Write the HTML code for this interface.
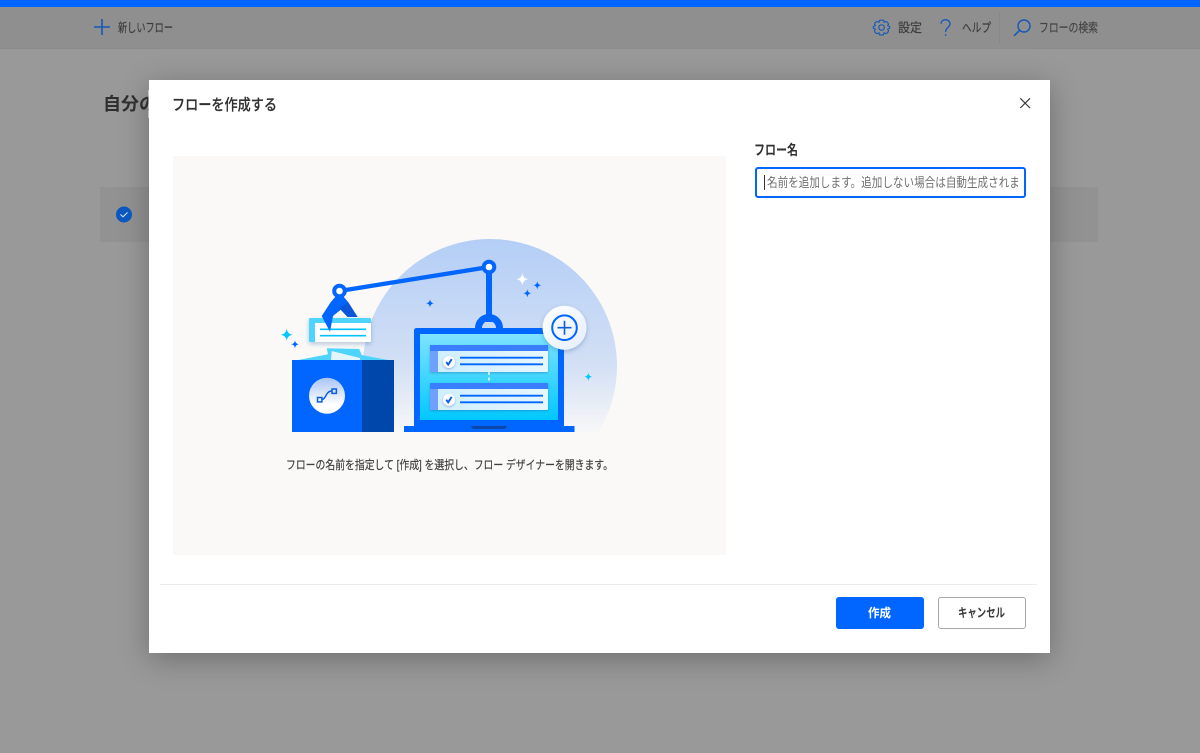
<!DOCTYPE html>
<html lang="ja">
<head>
<meta charset="utf-8">
<title>フローを作成する</title>
<style>
html,body{margin:0;padding:0;width:1200px;height:753px;overflow:hidden;background:#999;}
body{position:relative;font-family:"Liberation Sans","Noto Sans CJK JP",sans-serif;}
.abs{position:absolute;box-sizing:border-box;}
svg{position:absolute;left:0;top:0;filter:blur(.35px);}
text{font-family:"Liberation Sans","Noto Sans CJK JP",sans-serif;}
.h{stroke:currentColor;stroke-width:.18px;}
</style>
</head>
<body>
<div class="abs" style="left:0;top:0;width:1200px;height:7px;background:#0066ff"></div>
<div class="abs" style="left:0;top:7px;width:1200px;height:42px;background:#8f8f8f;border-bottom:1px solid #8b8b8b"></div>
<div class="abs" style="left:999px;top:12px;width:1px;height:31px;background:#888"></div>
<div class="abs" style="left:100px;top:187px;width:998px;height:55px;background:#929292"></div>
<div class="abs" style="left:148.5px;top:79.5px;width:901.5px;height:573.5px;background:#fff;box-shadow:0 6px 28px rgba(0,0,0,.28)"></div>
<div class="abs" style="left:173px;top:156px;width:553px;height:399px;background:#faf9f8"></div>
<div class="abs" style="left:160px;top:584px;width:877px;height:1px;background:#edebe9"></div>
<div class="abs" style="left:755px;top:167px;width:271px;height:31px;background:#fff;border:2px solid #0066ff;border-radius:3px"></div>
<div class="abs" style="left:836px;top:597px;width:88px;height:32px;background:#0066ff;border-radius:3px"></div>
<div class="abs" style="left:938px;top:597px;width:88px;height:32px;background:#fff;border:1px solid #a8a8a8;border-radius:3px"></div>

<svg width="1200" height="753" viewBox="0 0 1200 753" xmlns="http://www.w3.org/2000/svg">
<defs>
<linearGradient id="bg" x1="0" y1="0" x2="0" y2="1"><stop offset="0" stop-color="#b4cef6"/><stop offset=".5" stop-color="#d3e0f5"/><stop offset=".78" stop-color="#faf9f8"/></linearGradient>
<linearGradient id="scr" x1="0" y1="0" x2="0" y2="1"><stop offset="0" stop-color="#7fe3ff"/><stop offset="1" stop-color="#00c8ff"/></linearGradient>
<linearGradient id="cbody" x1="0" y1="0" x2="1" y2="0"><stop offset="0" stop-color="#cdeeff"/><stop offset="1" stop-color="#e6f6ff"/></linearGradient>
<linearGradient id="orb" x1="0" y1="0" x2="0" y2="1"><stop offset="0" stop-color="#a8c4f5"/><stop offset=".75" stop-color="#fff"/></linearGradient>
<linearGradient id="badge" x1="0" y1="0" x2="1" y2="1"><stop offset="0" stop-color="#fff"/><stop offset="1" stop-color="#e6eefb"/></linearGradient>
<filter id="sh" x="-30%" y="-30%" width="160%" height="160%"><feDropShadow dx="0" dy="2" stdDeviation="2.500" flood-color="#20508f" flood-opacity=".3"/></filter>
<filter id="sh2" x="-40%" y="-40%" width="180%" height="180%"><feDropShadow dx="0" dy="1" stdDeviation="1" flood-color="#20508f" flood-opacity=".4"/></filter>
<clipPath id="cut"><rect x="340" y="230" width="300" height="202"/></clipPath>
<clipPath id="ph"><rect x="762" y="170" width="256" height="26"/></clipPath>
<clipPath id="hub"><rect x="470" y="300" width="40" height="28.500"/></clipPath>
</defs>

<!-- top bar -->
<path d="M94 27H110M102 19V35" stroke="#1558b8" stroke-width="1.600" fill="none"/>
<text class="h" x="118" y="32" font-size="12.500" fill="#3c3c3c" color="#3c3c3c" textLength="55" lengthAdjust="spacingAndGlyphs">新しいフロー</text>
<g fill="none" stroke="#1558b8" stroke-width="1.200" stroke-linejoin="round" transform="translate(881.600 27.500) scale(.92) translate(-881.500 -27.600)">
<path d="M879.400 19.600h4.200l.6 2.400 2-.9 1.900.9.900 2-.9 1.600 2.200 1v1.800l-2.200 1 .9 1.900-.9 2-2 .9-2-.9-.6 2.400h-4.200l-.6-2.400-2 .9-2-.9-.9-2 .9-1.900-2.200-1v-1.800l2.200-1-.9-1.600.9-2 1.900-.9 2 .9z"/>
<circle cx="881.500" cy="27.600" r="3"/>
</g>
<text class="h" x="898" y="32" font-size="12.500" fill="#3c3c3c" color="#3c3c3c" textLength="24" lengthAdjust="spacingAndGlyphs">設定</text>
<path d="M941 23.800C941 18.300 950 18.300 950 23.800C950 27.600 945.600 27.400 945.600 32" fill="none" stroke="#1558b8" stroke-width="1.300"/>
<circle cx="945.600" cy="35" r=".9" fill="#1558b8"/>
<text class="h" x="962" y="32" font-size="12.500" fill="#3c3c3c" color="#3c3c3c" textLength="29" lengthAdjust="spacingAndGlyphs">ヘルプ</text>
<circle cx="1024" cy="26" r="6" fill="none" stroke="#1558b8" stroke-width="1.400"/>
<path d="M1019.600 30.400L1014 35.800" stroke="#1558b8" stroke-width="1.600"/>
<text class="h" x="1039" y="32" font-size="12.500" fill="#444" color="#444" textLength="59" lengthAdjust="spacingAndGlyphs">フローの検索</text>

<!-- background page -->
<g>
<text x="103" y="110" font-size="17.500" font-weight="700" fill="#2e2e2e" textLength="54" lengthAdjust="spacingAndGlyphs">自分の</text>
<rect x="148.500" y="90" width="14" height="28" fill="#fff"/>
</g>
<circle cx="124" cy="214.500" r="8" fill="#0b57c0"/>
<path d="M120.500 214.500l2.500 2.300 4.500-4.300" fill="none" stroke="#d5e2f5" stroke-width="1.100"/>

<!-- dialog text -->
<text class="h" x="172" y="110" font-size="15.500" font-weight="500" fill="#323130" color="#323130" textLength="105" lengthAdjust="spacingAndGlyphs">フローを作成する</text>
<path d="M1020.300 98.300L1030 108M1030 98.300L1020.300 108" stroke="#3c3c3c" stroke-width="1.200" fill="none"/>
<text x="754" y="155" font-size="14" font-weight="700" fill="#323130" textLength="44" lengthAdjust="spacingAndGlyphs">フロー名</text>
<path d="M764.500 175V190" stroke="#333" stroke-width="1"/>
<g clip-path="url(#ph)"><text x="767" y="187" font-size="12.800" fill="#6f6f6f" textLength="273" lengthAdjust="spacingAndGlyphs">名前を追加します。追加しない場合は自動生成されます。</text></g>
<text class="h" x="286" y="469" font-size="12.200" fill="#3e3e3e" color="#3e3e3e" textLength="327" lengthAdjust="spacingAndGlyphs">フローの名前を指定して [作成] を選択し、フロー デザイナーを開きます。</text>
<text x="868" y="617" font-size="12" font-weight="700" fill="#fff" textLength="23" lengthAdjust="spacingAndGlyphs">作成</text>
<text x="958" y="617" font-size="12.500" font-weight="700" fill="#3a3a3a" textLength="47" lengthAdjust="spacingAndGlyphs">キャンセル</text>

<!-- illustration -->
<circle cx="490" cy="366" r="127" fill="url(#bg)" clip-path="url(#cut)"/>

<!-- arm -->
<path d="M489 267L339.500 291" stroke="#0066ff" stroke-width="4.300"/>
<path d="M489 267V322" stroke="#0066ff" stroke-width="6"/>
<g clip-path="url(#hub)"><circle cx="489" cy="328" r="10.500" fill="none" stroke="#0066ff" stroke-width="7"/></g>
<circle cx="489" cy="267" r="5.300" fill="#fff" stroke="#0066ff" stroke-width="4"/>

<!-- lifted card -->
<rect x="309" y="318" width="62" height="24" rx="1.500" fill="#fff" filter="url(#sh)"/>
<path d="M310.500 318h59a1.500 1.500 0 0 1 1.500 1.500v3.500h-56v19h-4.500a1.500 1.500 0 0 1-1.500-1.500v-21a1.500 1.500 0 0 1 1.500-1.500z" fill="#4fd4ff"/>
<path d="M320 329.300H366M320 335.700H366" stroke="#00c2ff" stroke-width="1.700"/>

<!-- claw -->
<path d="M336 296H343L348.300 302.300L341 309.500L333 316L330 331.700L321.700 316L330.700 302.300Z" fill="#0066ff"/>
<path d="M348.300 302.300L357.700 317L347.500 317L339 308Z" fill="#0a55d8"/>
<circle cx="339.500" cy="291" r="5.300" fill="#fff" stroke="#0066ff" stroke-width="4"/>

<!-- box -->
<path d="M298.300 360L328 354.300L326.700 348.300L359.300 349L361.700 355L388.300 360Z" fill="#4fd4ff"/>
<path d="M331 360L331.700 351L360 358V360Z" fill="#e2f5fd"/>
<rect x="292" y="360" width="70" height="72" fill="#0066ff"/>
<rect x="362" y="360" width="32" height="72" fill="#0047ab"/>
<circle cx="327" cy="395.700" r="18" fill="url(#orb)"/>
<rect x="317.500" y="397.500" width="4.400" height="4.400" fill="none" stroke="#0a5ce0" stroke-width="1.500"/>
<rect x="332" y="389" width="4.400" height="4.400" fill="none" stroke="#0a5ce0" stroke-width="1.500"/>
<path d="M322 399.500C326 399.500 325.500 391 332 391" fill="none" stroke="#0a5ce0" stroke-width="1.400"/>

<!-- laptop -->
<rect x="414" y="328" width="150" height="100" rx="2.500" fill="#0066ff"/>
<rect x="420" y="334" width="138" height="86" fill="url(#scr)"/>
<rect x="404" y="426" width="170.500" height="6" fill="#0066ff"/>
<path d="M470.700 426H507.300L505 429H473Z" fill="#0b47ad"/>

<g>
<rect x="430" y="345" width="118" height="27" rx="1" fill="url(#cbody)" filter="url(#sh2)"/>
<rect x="430" y="345" width="118" height="6" fill="#3b7dff"/>
<rect x="430" y="351" width="8" height="21" fill="#6f9fff"/>
<circle cx="449" cy="362" r="6" fill="#fff" filter="url(#sh2)"/>
<path d="M446.200 362l2 2.600 3.500-5.400" fill="none" stroke="#0b5de6" stroke-width="1.900"/>
<path d="M460 357.700H543M460 364.300H543" stroke="#0066ff" stroke-width="1.800"/>
</g>
<g>
<rect x="430" y="383" width="118" height="27" rx="1" fill="url(#cbody)" filter="url(#sh2)"/>
<rect x="430" y="383" width="118" height="6" fill="#3b7dff"/>
<rect x="430" y="389" width="8" height="21" fill="#6f9fff"/>
<circle cx="449" cy="399.700" r="6" fill="#fff" filter="url(#sh2)"/>
<path d="M446.200 399.700l2 2.600 3.500-5.400" fill="none" stroke="#0b5de6" stroke-width="1.900"/>
<path d="M460 395.700H543M460 402.300H543" stroke="#0066ff" stroke-width="1.800"/>
</g>
<path d="M489 372V382" stroke="#eafaff" stroke-width="1.600" stroke-dasharray="3 2.500"/>

<!-- plus badge -->
<circle cx="564.500" cy="327.700" r="22" fill="url(#badge)" filter="url(#sh)"/>
<circle cx="564.500" cy="327.700" r="12.300" fill="none" stroke="#0066ff" stroke-width="2"/>
<path d="M557.500 327.700H571.500M564.500 320.700V334.700" stroke="#0a5ce0" stroke-width="1.600"/>

<!-- sparkles -->
<g>
<path d="M522.300 273.300Q523 278.600 528 279.300Q523 280 522.300 285.300Q521.600 280 516.600 279.300Q521.600 278.600 522.300 273.300Z" fill="#fff"/>
<path d="M537.300 281.300Q537.700 284.900 541.300 285.300Q537.700 285.700 537.300 289.300Q536.900 285.700 533.300 285.300Q536.900 284.900 537.300 281.300Z" fill="#0066ff"/>
<path d="M527.300 289.300Q527.700 292.900 531.300 293.300Q527.700 293.700 527.300 297.300Q526.900 293.700 523.300 293.300Q526.900 292.900 527.300 289.300Z" fill="#0066ff"/>
<path d="M430 299.300Q430.400 302.900 434 303.300Q430.400 303.700 430 307.300Q429.600 303.700 426 303.300Q429.600 302.900 430 299.300Z" fill="#0066ff"/>
<path d="M588.300 372.700Q588.700 376.300 592.300 376.700Q588.700 377.100 588.300 380.700Q587.900 377.100 584.300 376.700Q587.900 376.300 588.300 372.700Z" fill="#00c8ff"/>
<path d="M286.700 328.700Q287.400 334 292.700 334.700Q287.400 335.400 286.700 340.700Q286 335.400 280.700 334.700Q286 334 286.700 328.700Z" fill="#00c8ff"/>
<path d="M295 340.300Q295.400 343.900 299 344.300Q295.400 344.700 295 348.300Q294.600 344.700 291 344.300Q294.600 343.900 295 340.300Z" fill="#0066ff"/>
</g>
</svg>
</body>
</html>
